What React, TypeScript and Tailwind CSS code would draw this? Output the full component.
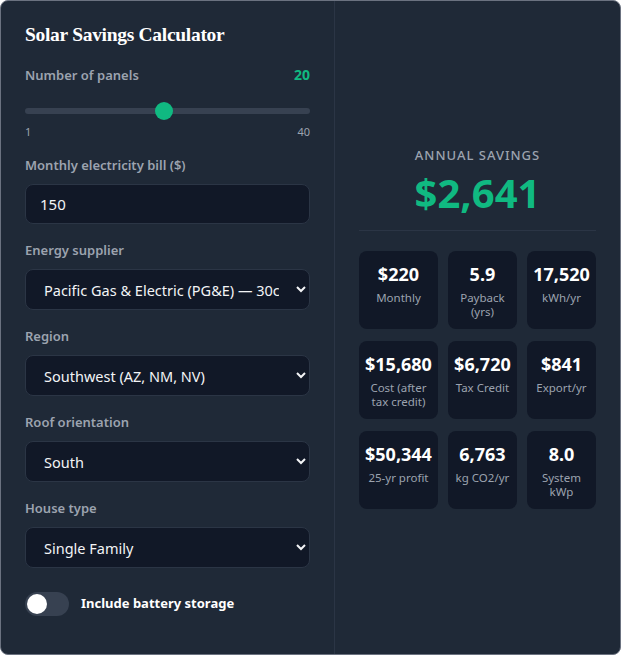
import React from "react";

const stats: { v: string; l: string }[] = [
  { v: "$220", l: "Monthly" },
  { v: "5.9", l: "Payback (yrs)" },
  { v: "17,520", l: "kWh/yr" },
  { v: "$15,680", l: "Cost (after tax credit)" },
  { v: "$6,720", l: "Tax Credit" },
  { v: "$841", l: "Export/yr" },
  { v: "$50,344", l: "25-yr profit" },
  { v: "6,763", l: "kg CO2/yr" },
  { v: "8.0", l: "System kWp" },
];

function Field({ label, children }: { label: string; children: React.ReactNode }) {
  return (
    <div className="flex flex-col">
      <label className="text-[13px] font-semibold text-[#9ca3af] leading-[18px] mb-[10px]">{label}</label>
      {children}
    </div>
  );
}

function Select({ value, options }: { value: string; options: string[] }) {
  return (
    <select
      defaultValue={value}
      className="w-full h-[41px] rounded-lg border border-[#2b3545] bg-[#111827] px-[14px] text-[14.5px] text-[#f3f4f6] outline-none"
    >
      {options.map((o) => (
        <option key={o} value={o}>
          {o}
        </option>
      ))}
    </select>
  );
}

export default function App() {
  return (
    <div className="w-[621px] h-[655px] bg-white" style={{ fontFamily: '"Noto Sans", "Open Sans", sans-serif' }}>
      <div className="w-[621px] h-[655px] flex rounded-lg border border-[#6b7280] bg-[#1f2937] overflow-hidden">
        <div className="w-[334px] shrink-0 border-r border-[#2b3545] px-6 pt-[21px] flex flex-col">
          <h1
            className="text-[19.5px] font-bold text-white leading-[26px] tracking-[-0.3px]"
            style={{ fontFamily: '"Liberation Serif", serif' }}
          >
            Solar Savings Calculator
          </h1>
          <div className="mt-[18px] flex items-center justify-between">
            <span className="text-[13px] font-semibold text-[#9ca3af] leading-[18px]">Number of panels</span>
            <span className="text-[14px] font-bold text-[#10b981] leading-[18px]">20</span>
          </div>
          <div className="mt-[18px] relative h-[18px] flex items-center">
            <div className="w-full h-[6px] rounded-full bg-[#374151]" />
            <div className="absolute left-[130px] top-0 w-[18px] h-[18px] rounded-full bg-[#10b981]" />
          </div>
          <div className="mt-[4px] flex justify-between text-[11px] text-[#9ca3af] leading-[16px]">
            <span>1</span>
            <span>40</span>
          </div>
          <div className="mt-[16px] flex flex-col gap-[17px]">
            <Field label="Monthly electricity bill ($)">
              <input
                defaultValue="150"
                className="w-full h-[40px] rounded-lg border border-[#2b3545] bg-[#111827] px-[14px] text-[15px] text-[#f3f4f6] outline-none"
              />
            </Field>
            <Field label="Energy supplier">
              <Select value="Pacific Gas & Electric (PG&E) — 30c/kWh" options={["Pacific Gas & Electric (PG&E) — 30c/kWh"]} />
            </Field>
            <Field label="Region">
              <Select value="Southwest (AZ, NM, NV)" options={["Southwest (AZ, NM, NV)"]} />
            </Field>
            <Field label="Roof orientation">
              <Select value="South" options={["South"]} />
            </Field>
            <Field label="House type">
              <Select value="Single Family" options={["Single Family"]} />
            </Field>
          </div>
          <div className="mt-[24px] flex items-center gap-3">
            <div className="w-[44px] h-[24px] rounded-full bg-[#374151] p-[2px] flex items-center">
              <div className="w-[20px] h-[20px] rounded-full bg-white" />
            </div>
            <span className="text-[13px] font-bold text-white">Include battery storage</span>
          </div>
        </div>
        <div className="flex-1 px-6 flex flex-col justify-center">
          <div className="border-b border-[#2b3545] pb-[12px] flex flex-col items-center">
            <div className="text-[13px] font-medium tracking-[1px] text-[#9ca3af] leading-[18px]">ANNUAL SAVINGS</div>
            <div className="mt-[4px] text-[40px] font-bold text-[#10b981] leading-[50px]">$2,641</div>
          </div>
          <div className="mt-[20px] grid grid-cols-[1fr_1fr_1fr] gap-x-[10px] gap-y-[12px]">
            {stats.map((s) => (
              <div key={s.l} className="h-[78px] rounded-lg bg-[#111827] px-1.5 pt-[11px] text-center">
                <div className="text-[18px] font-bold text-white leading-[24px] whitespace-nowrap">{s.v}</div>
                <div className="mt-[5px] text-[11.5px] text-[#9ca3af] leading-[14px]">{s.l}</div>
              </div>
            ))}
          </div>
        </div>
      </div>
    </div>
  );
}
